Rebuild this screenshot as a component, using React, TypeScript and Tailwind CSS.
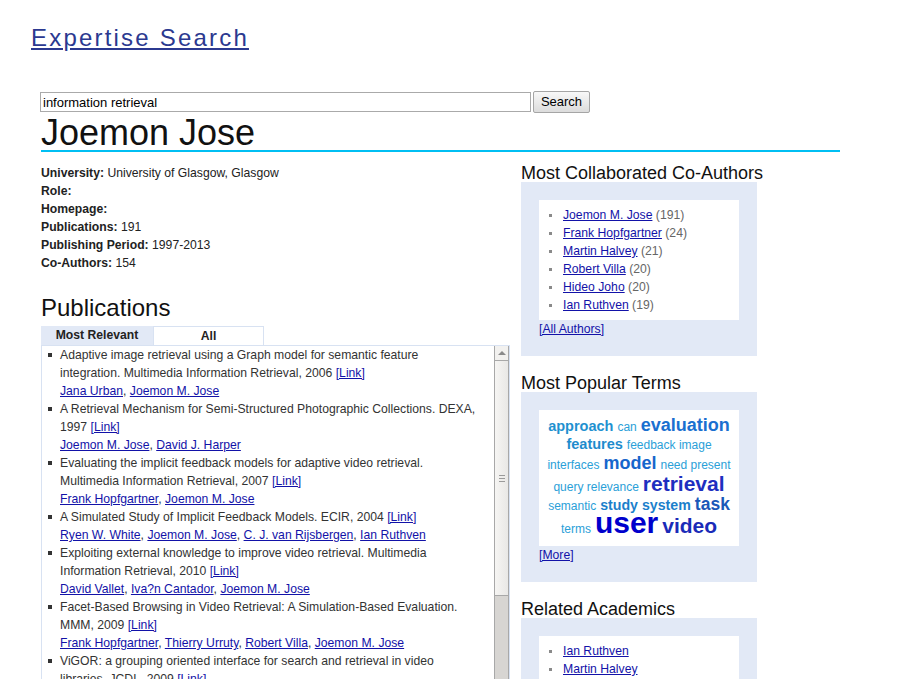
import React from 'react';

type Pub = { title: string; authors: string[] };

const pubs: Pub[] = [
  {
    title: 'Adaptive image retrieval using a Graph model for semantic feature integration. Multimedia Information Retrieval, 2006',
    authors: ['Jana Urban', 'Joemon M. Jose'],
  },
  {
    title: 'A Retrieval Mechanism for Semi-Structured Photographic Collections. DEXA, 1997',
    authors: ['Joemon M. Jose', 'David J. Harper'],
  },
  {
    title: 'Evaluating the implicit feedback models for adaptive video retrieval. Multimedia Information Retrieval, 2007',
    authors: ['Frank Hopfgartner', 'Joemon M. Jose'],
  },
  {
    title: 'A Simulated Study of Implicit Feedback Models. ECIR, 2004',
    authors: ['Ryen W. White', 'Joemon M. Jose', 'C. J. van Rijsbergen', 'Ian Ruthven'],
  },
  {
    title: 'Exploiting external knowledge to improve video retrieval. Multimedia Information Retrieval, 2010',
    authors: ['David Vallet', 'Iva?n Cantador', 'Joemon M. Jose'],
  },
  {
    title: 'Facet-Based Browsing in Video Retrieval: A Simulation-Based Evaluation. MMM, 2009',
    authors: ['Frank Hopfgartner', 'Thierry Urruty', 'Robert Villa', 'Joemon M. Jose'],
  },
  {
    title: 'ViGOR: a grouping oriented interface for search and retrieval in video libraries. JCDL, 2009',
    authors: ['Martin Halvey', 'David Vallet', 'David Hannah', 'Joemon M. Jose'],
  },
];

const coAuthors: [string, string][] = [
  ['Joemon M. Jose', '191'],
  ['Frank Hopfgartner', '24'],
  ['Martin Halvey', '21'],
  ['Robert Villa', '20'],
  ['Hideo Joho', '20'],
  ['Ian Ruthven', '19'],
];

const related = ['Ian Ruthven', 'Martin Halvey', 'Robert Villa', 'Frank Hopfgartner'];

const linkCls = 'text-[#1212a8] underline';

const Scrollbar = () => (
  <div className="w-[15px] shrink-0 flex flex-col border-x border-[#a8a8a8]">
    <div className="h-[15px] bg-[#f2f1ef] border-b border-[#a8a8a8] flex items-center justify-center">
      <div className="w-0 h-0 border-x-[4px] border-x-transparent border-b-[4px] border-b-[#8a8a8a]" />
    </div>
    <div className="h-[235px] bg-gradient-to-r from-[#f6f5f3] to-[#e9e8e6] border-b border-[#a8a8a8] flex flex-col items-center justify-center gap-[2px]">
      <div className="w-[6px] h-px bg-[#9a9a9a]" />
      <div className="w-[6px] h-px bg-[#9a9a9a]" />
      <div className="w-[6px] h-px bg-[#9a9a9a]" />
    </div>
    <div className="flex-1 bg-[#d7d5d2]" />
  </div>
);

const SideBox = ({ title, children, footer }: { title: string; children: React.ReactNode; footer?: React.ReactNode }) => (
  <div>
    <h2 className="text-[18px] leading-[18px] text-[#111] whitespace-nowrap">{title}</h2>
    <div className="bg-[#e2e9f6] px-[18px] pt-[18px] pb-[18px]">
      <div className="bg-white">{children}</div>
      {footer && <div className="text-[12.2px] leading-[18px]">{footer}</div>}
    </div>
  </div>
);

const SideList = ({ items }: { items: [string, string?][] }) => (
  <ul className="pt-[6px] pb-[6px] text-[12.2px] leading-[18px]">
    {items.map(([name, count]) => (
      <li key={name} className="flex items-start">
        <span className="ml-[10px] mt-[8px] w-[3px] h-[3px] bg-[#8a8a8a] shrink-0" />
        <span className="ml-[11px]">
          <a className={linkCls}>{name}</a>
          {count && <span className="text-[#666]"> ({count})</span>}
        </span>
      </li>
    ))}
  </ul>
);

const small = 'text-[12px] leading-none font-normal text-[#2aa0d8]';
const line = 'flex items-baseline justify-center gap-[4px] font-bold';

export default function App() {
  return (
    <div className="min-h-screen bg-white text-[#222]" style={{ fontFamily: '"Liberation Sans", Arial, sans-serif' }}>
      {/* Title */}
      <div className="pt-[24px] pl-[31px]">
        <a className="text-[24px] leading-[28px] tracking-[2.2px] text-[#2b3990] underline">Expertise Search</a>
      </div>

      <div className="pl-[41px] w-[840px] mt-[38px]">
        {/* Search */}
        <div className="flex items-center gap-[2px] -ml-px">
          <input
            defaultValue="information retrieval"
            className="w-[491px] h-[20px] border border-[#aaa] px-[2px] text-[13px] text-black outline-none"
          />
          <button className="h-[22px] w-[57px] rounded-[2px] border border-[#a5a5a5] bg-gradient-to-b from-[#f8f8f8] to-[#dcdcdc] text-[13px] text-black">
            Search
          </button>
        </div>

        {/* Name */}
        <h1 className="mt-[3px] text-[36px] leading-[34px] text-[#111] border-b-2 border-[#00bff3]">Joemon Jose</h1>

        <div className="flex gap-[11px] mt-[12px]">
          {/* Left column */}
          <div className="w-[469px]">
            <div className="text-[12.2px] leading-[18px] text-[#222]">
              <div><b>University:</b> University of Glasgow, Glasgow</div>
              <div><b>Role:</b></div>
              <div><b>Homepage:</b></div>
              <div><b>Publications:</b> 191</div>
              <div><b>Publishing Period:</b> 1997-2013</div>
              <div><b>Co-Authors:</b> 154</div>
            </div>

            <h2 className="mt-[22px] text-[24px] leading-[28px] text-[#111]">Publications</h2>

            <div className="mt-[4px] flex h-[19px] text-[12.2px] leading-[19px] font-bold text-[#222]">
              <div className="w-[112px] bg-[#e2e9f6] text-center">Most Relevant</div>
              <div className="w-[111px] border-x border-t border-[#d8e2f2] text-center">All</div>
            </div>

            <div className="flex h-[340px] overflow-hidden border-t border-l border-[#d8e2f2]">
              <ul className="flex-1 text-[12.2px] leading-[18px] text-[#333]">
                {pubs.map((p) => (
                  <li key={p.title} className="flex items-start">
                    <span className="ml-[6px] mt-[7px] w-[4px] h-[4px] bg-[#333] shrink-0" />
                    <div className="ml-[8px] w-[420px]">
                      {p.title} <a className={linkCls}>[Link]</a>
                      <div>
                        {p.authors.map((a, i) => (
                          <React.Fragment key={a}>
                            {i > 0 && ', '}
                            <a className={linkCls}>{a}</a>
                          </React.Fragment>
                        ))}
                      </div>
                    </div>
                  </li>
                ))}
              </ul>
              <Scrollbar />
              <div className="w-px bg-[#d8e2f2]" />
            </div>
          </div>

          {/* Right column */}
          <div className="w-[236px] flex flex-col gap-[18px]">
            <SideBox title="Most Collaborated Co-Authors" footer={<a className={linkCls}>[All Authors]</a>}>
              <SideList items={coAuthors} />
            </SideBox>

            <SideBox title="Most Popular Terms" footer={<a className={linkCls}>[More]</a>}>
              <div className="pt-[6px] pb-[7px]">
                <div className={`${line} h-[21px]`}>
                  <span className="text-[14.5px] leading-none text-[#1f91d0]">approach</span>
                  <span className={small}>can</span>
                  <span className="text-[18px] leading-none text-[#1a70d0]">evaluation</span>
                </div>
                <div className={`${line} h-[17px]`}>
                  <span className="text-[14.5px] leading-none text-[#1e8ccd]">features</span>
                  <span className={small}>feedback image</span>
                </div>
                <div className={`${line} h-[19px]`}>
                  <span className={small}>interfaces</span>
                  <span className="text-[18px] leading-none text-[#1766cc]">model</span>
                  <span className={small}>need present</span>
                </div>
                <div className={`${line} h-[23px]`}>
                  <span className={small}>query relevance</span>
                  <span className="text-[21px] leading-none text-[#1e2fc0]">retrieval</span>
                </div>
                <div className={`${line} h-[12px]`}>
                  <span className={small}>semantic</span>
                  <span className="text-[14.2px] leading-none text-[#1b7fcb]">study system</span>
                  <span className="text-[17.5px] leading-none text-[#1a58b8]">task</span>
                </div>
                <div className={`${line} h-[31px]`}>
                  <span className={small}>terms</span>
                  <span className="text-[30px] leading-none text-[#0000cc]">user</span>
                  <span className="text-[21px] leading-none text-[#1a2bb8]">video</span>
                </div>
              </div>
            </SideBox>

            <SideBox title="Related Academics">
              <SideList items={related.map((r) => [r] as [string])} />
            </SideBox>
          </div>
        </div>
      </div>
    </div>
  );
}
